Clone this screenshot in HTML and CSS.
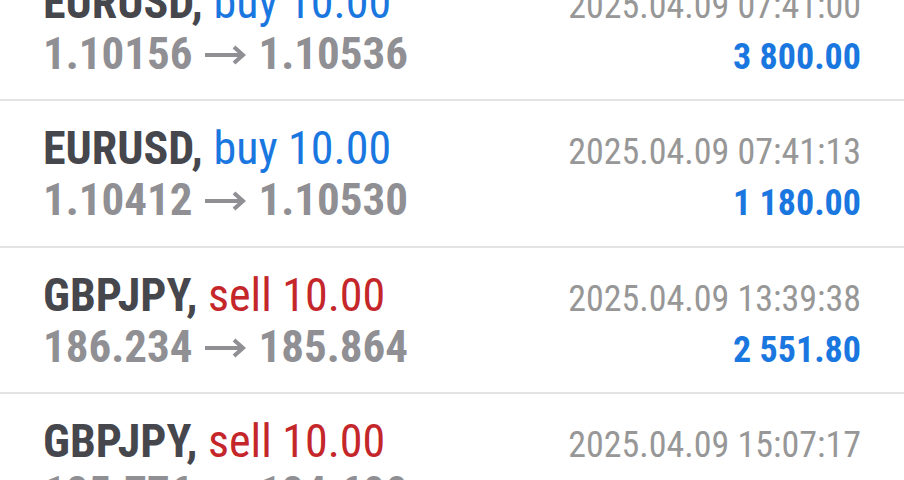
FILE: index.html
```html
<!DOCTYPE html>
<html lang="en">
<head>
    <meta charset="UTF-8">
    <meta name="viewport" content="width=device-width, initial-scale=1.0">
    <title>History</title>
    <link rel="stylesheet" href="styles.css">
</head>
<body>
    <main class="deals">
        <div class="deal">
            <div class="deal-left">
                <div class="deal-title">EURUSD, <span class="buy">buy 10.00</span></div>
                <div class="deal-price">1.10156<svg class="arrow" viewBox="0 0 42 20"><path d="M1 10H39M30 2L39 10L30 18"/></svg>1.10536</div>
            </div>
            <div class="deal-right">
                <div class="deal-time">2025.04.09 07:41:00</div>
                <div class="deal-profit">3 800.00</div>
            </div>
        </div>
        <div class="deal">
            <div class="deal-left">
                <div class="deal-title">EURUSD, <span class="buy">buy 10.00</span></div>
                <div class="deal-price">1.10412<svg class="arrow" viewBox="0 0 42 20"><path d="M1 10H39M30 2L39 10L30 18"/></svg>1.10530</div>
            </div>
            <div class="deal-right">
                <div class="deal-time">2025.04.09 07:41:13</div>
                <div class="deal-profit">1 180.00</div>
            </div>
        </div>
        <div class="deal">
            <div class="deal-left">
                <div class="deal-title">GBPJPY, <span class="sell">sell 10.00</span></div>
                <div class="deal-price">186.234<svg class="arrow" viewBox="0 0 42 20"><path d="M1 10H39M30 2L39 10L30 18"/></svg>185.864</div>
            </div>
            <div class="deal-right">
                <div class="deal-time">2025.04.09 13:39:38</div>
                <div class="deal-profit">2 551.80</div>
            </div>
        </div>
        <div class="deal">
            <div class="deal-left">
                <div class="deal-title">GBPJPY, <span class="sell">sell 10.00</span></div>
                <div class="deal-price">185.776<svg class="arrow" viewBox="0 0 42 20"><path d="M1 10H39M30 2L39 10L30 18"/></svg>184.600</div>
            </div>
            <div class="deal-right">
                <div class="deal-time">2025.04.09 15:07:17</div>
                <div class="deal-profit">1 176.00</div>
            </div>
        </div>
    </main>
</body>
</html>
```

FILE: styles.css
```css
body {
    margin: 0;
    padding: 0;
    background-color: #fff;
    font-family: "Roboto Condensed", Roboto, sans-serif;
    font-stretch: 75%;
    overflow: hidden;
}
.deals {
    margin-top: -45.5px;
}
.deal {
    display: flex;
    justify-content: space-between;
    align-items: baseline;
    height: 144.5px;
    box-sizing: content-box;
    padding: 0 43px 0 43px;
    border-bottom: 2px solid #e3e3e3;
}
.deal-left,
.deal-right {
    padding-top: 22px;
}
.deal-right {
    text-align: right;
}
.deal-title {
    font-size: 46px;
    line-height: 51px;
    font-weight: 700;
    color: #46464d;
}
.buy {
    font-weight: 400;
    color: #1a77e0;
}
.sell {
    font-weight: 400;
    color: #c4262a;
}
.deal-price {
    font-size: 45px;
    line-height: 51px;
    font-weight: 700;
    color: #8f8f94;
}
.arrow {
    width: 42px;
    height: 20px;
    margin: 0 13px 0 11px;
    vertical-align: 4px;
    fill: none;
    stroke: currentColor;
    stroke-width: 4;
}
.deal-time {
    font-size: 36px;
    line-height: 51px;
    color: #979797;
}
.deal-profit {
    font-size: 36px;
    line-height: 51px;
    font-weight: 700;
    color: #1a77e0;
}
```
